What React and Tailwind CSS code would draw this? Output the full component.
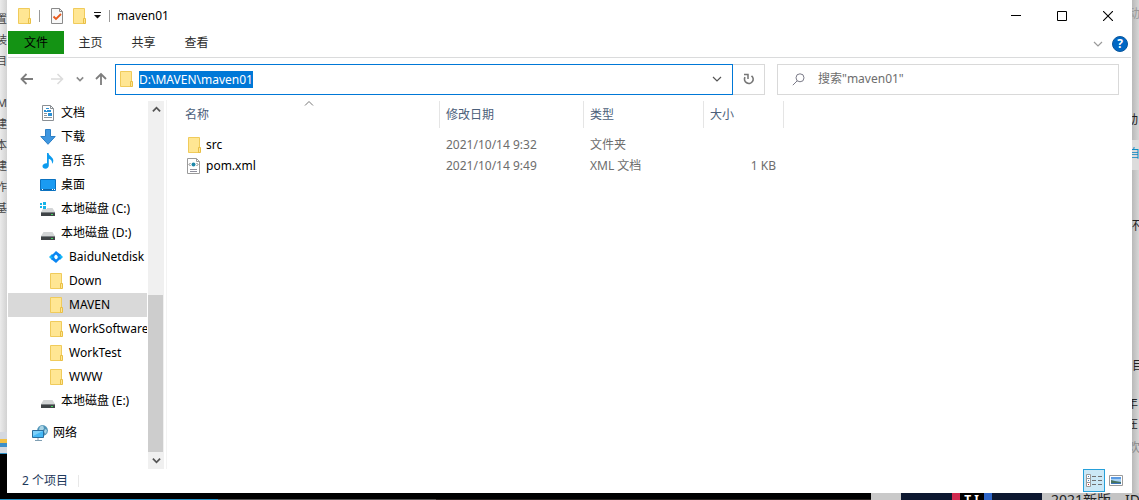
import { useEffect, useRef } from 'react'

const NAV_ITEMS = [
  { name: '文档', icon: 'doc', level: 1 },
  { name: '下载', icon: 'download', level: 1 },
  { name: '音乐', icon: 'music', level: 1 },
  { name: '桌面', icon: 'desktop', level: 1 },
  { name: '本地磁盘 (C:)', icon: 'system', level: 1 },
  { name: '本地磁盘 (D:)', icon: 'disk', level: 1 },
  { name: 'BaiduNetdisk', icon: 'baidu', level: 2 },
  { name: 'Down', icon: 'folder', level: 2 },
  { name: 'MAVEN', icon: 'folder', level: 2, selected: true },
  { name: 'WorkSoftware', icon: 'folder', level: 2 },
  { name: 'WorkTest', icon: 'folder', level: 2 },
  { name: 'WWW', icon: 'folder', level: 2 },
  { name: '本地磁盘 (E:)', icon: 'disk', level: 1 },
]

const FILES = [
  { name: 'src', icon: 'folder', date: '2021/10/14 9:32', type: '文件夹', size: '' },
  { name: 'pom.xml', icon: 'xml', date: '2021/10/14 9:49', type: 'XML 文档', size: '1 KB' },
]

function FolderIcon() {
  return (
    <svg width="16" height="16" viewBox="0 0 16 16" className="shrink-0">
      <path d="M2.5.5h11v15h-11z" fill="#ffe693" stroke="#f0cb5b" />
      <path d="M12.5 10.5h2v5h-2z" fill="#ffe693" stroke="#e9bf45" />
    </svg>
  )
}

function Drive({ windows }) {
  return (
    <svg width="16" height="16" viewBox="0 0 16 16" className="shrink-0">
      <path d="M3.5 7h9l2.5 4H1z" fill="#d3d5d6" />
      <path d="M1 11h14v4H1z" fill="#3f4346" />
      <path d="M1 11h14v1H1z" fill="#7b8083" />
      <path d="M11 13h2v1h-2z" fill="#3fd65b" />
      {windows && (
        <>
          <path d="M0 1h7v7H0z" fill="#fff" />
          <path d="M0 2h2v2H0zM3 1h3v3H3zM0 5h2v2H0zM3 5h3v3H3z" fill="#16b4e8" />
        </>
      )}
    </svg>
  )
}

function Icon({ name }) {
  switch (name) {
    case 'folder':
      return <FolderIcon />
    case 'disk':
      return <Drive />
    case 'system':
      return <Drive windows />
    case 'doc':
      return (
        <svg width="16" height="16" viewBox="0 0 16 16" className="shrink-0">
          <path d="M2.5.5h8l3 3v12h-11z" fill="#fff" stroke="#8a8f94" />
          <path d="M10.5.5v3h3" fill="none" stroke="#8a8f94" />
          <path d="M4 8.5h3M4 10.500h3M4 12.500h8" stroke="#8b959c" />
          <path d="M6 3h3v1H6zM4 5h2v1H4zM7 5h4v1H7zM4 6h7v1H4zM8 8h4v3H8z" fill="#2a8fd4" />
        </svg>
      )
    case 'download':
      return (
        <svg width="16" height="16" viewBox="0 0 16 16" className="shrink-0">
          <path d="M5.5.5h5v7h4.7L8 15.3.8 7.5h4.7z" fill="#3f97e0" stroke="#2c7fc6" />
        </svg>
      )
    case 'music':
      return (
        <svg width="16" height="16" viewBox="0 0 16 16" className="shrink-0">
          <path
            d="M7 0h1.5c.3 3 4.8 4 4.8 7.5 0 1.5-.6 2.5-1.3 3.3.4-2.8-1-4.3-3.2-5V12.500c0 1.900-1.500 3.300-3.300 3.300S2.500 14.800 2.500 13.300c0-1.800 2-3.300 4.500-3z"
            fill="#0c9bee"
          />
        </svg>
      )
    case 'desktop':
      return (
        <svg width="16" height="16" viewBox="0 0 16 16" className="shrink-0">
          <path d="M.5 2.500h15v11H.5z" fill="#1a9bf2" stroke="#0b72c0" />
          <path d="M1 12h14v1H1z" fill="#0e65a8" />
          <path d="M2 12h1v1H2zM12 12h1v1h-1zM14 12h1v1h-1z" fill="#fff" />
        </svg>
      )
    case 'baidu':
      return (
        <svg width="16" height="16" viewBox="0 0 16 16" className="shrink-0">
          <path d="M1 8l3-3 3 3-3 3z" fill="#17b9f7" />
          <path d="M9 8l3-3 3 3-3 3z" fill="#17b9f7" />
          <path d="M3 7l5-5 5 4-2.500 2L8 5.500 4.500 8.500z" fill="#0a86f2" />
          <path d="M13 9l-5 5-5-4 2.500-2L8 10.500l3.500-3z" fill="#0a86f2" />
          <path d="M8 6.500L9.800 8 8 9.500 6.200 8z" fill="#fff" />
        </svg>
      )
    case 'network':
      return (
        <svg width="16" height="16" viewBox="0 0 16 16" className="shrink-0">
          <circle cx="10.5" cy="5.5" r="5.400" fill="#4f94b8" />
          <path d="M8 1.500l3-1 1 3-2 3-3-2zM13 4l2 1-1 4-2-2z" fill="#a9d3e4" />
          <path d="M.5 5.500h11v7H.5z" fill="#45b8f5" stroke="#2b6d9c" />
          <path d="M1 6h10L1 11z" fill="#7dd1fb" />
          <path d="M6 13v2M3 15.500h7" stroke="#7f9fb3" />
        </svg>
      )
    case 'xml':
      return (
        <svg width="16" height="16" viewBox="0 0 16 16" className="shrink-0">
          <path d="M1.5.5h9l3 3v12h-12z" fill="#fff" stroke="#9a9a9a" />
          <path d="M10.5.5v3h3" fill="none" stroke="#9a9a9a" />
          <circle cx="7.5" cy="6.500" r="2" fill="#1c86a8" />
          <path d="M4.500 5L3 6.500 4.500 8M10.500 5L12 6.500 10.500 8" fill="none" stroke="#777" />
          <path d="M4 11.500h7M4 13.500h7" stroke="#8f8f9c" />
        </svg>
      )
    default:
      return null
  }
}

function Chevron({ direction = 'down', color = '#555', thick = false, size = 10 }) {
  return (
    <svg width={size} height={size} viewBox="0 0 10 10" className="shrink-0">
      <path
        d={direction === 'up' ? 'M1 7l4-4 4 4' : 'M1 3l4 4 4-4'}
        fill="none"
        stroke={color}
        strokeWidth={thick ? 2 : 1.2}
      />
    </svg>
  )
}

function TitleBar() {
  return (
    <header className="flex h-[31px] items-center justify-between">
      <div className="flex items-center pl-2">
        <FolderIcon />
        <span className="ml-[7px] h-3 w-px bg-[#999]" />
        <button aria-label="属性" className="ml-[9px]">
          <svg width="16" height="16" viewBox="0 0 16 16">
            <path d="M2.5.5h8l3 3v12h-11z" fill="#f8f8f8" stroke="#8a8a8a" />
            <path d="M10.5.5v3h3" fill="none" stroke="#8a8a8a" />
            <path d="M4.500 8.500l2.500 2.500 5-5" fill="none" stroke="#e8591c" strokeWidth="1.800" />
          </svg>
        </button>
        <button aria-label="新建文件夹" className="ml-[6px]">
          <FolderIcon />
        </button>
        <button aria-label="自定义快速访问工具栏" className="ml-[7px]">
          <svg width="7" height="7" viewBox="0 0 7 7">
            <path d="M0 0h7v1H0zM0 3h7L3.5 6.500z" fill="#111" />
          </svg>
        </button>
        <span className="ml-2 h-3 w-px bg-[#999]" />
        <h1 className="ml-[7px] text-[12px]">maven01</h1>
      </div>
      <div className="flex self-stretch">
        <button aria-label="最小化" className="flex w-[46px] items-center justify-center">
          <svg width="10" height="10" viewBox="0 0 10 10">
            <path d="M0 4h10v1H0z" />
          </svg>
        </button>
        <button aria-label="最大化" className="flex w-[46px] items-center justify-center">
          <svg width="10" height="10" viewBox="0 0 10 10">
            <path d="M.5.5h9v9h-9z" fill="none" stroke="#000" />
          </svg>
        </button>
        <button aria-label="关闭" className="flex w-[46px] items-center justify-center">
          <svg width="10" height="10" viewBox="0 0 10 10">
            <path d="M0 0l10 10M10 0L0 10" stroke="#000" strokeWidth="1.100" />
          </svg>
        </button>
      </div>
    </header>
  )
}

function Ribbon() {
  return (
    <div className="flex h-[27px] items-start justify-between border-b border-[#dadbdc]">
      <div className="flex h-[23px] text-[#2b2b2b]">
        <button className="w-14 bg-[#149314] pt-px text-black">文件</button>
        <button className="w-[53px] pt-px">主页</button>
        <button className="w-[53px] pt-px">共享</button>
        <button className="w-[53px] pt-px">查看</button>
      </div>
      <div className="flex h-[26px] items-center gap-[9px] pr-[3px]">
        <button aria-label="展开功能区">
          <Chevron color="#9a9a9a" />
        </button>
        <button
          aria-label="帮助"
          className="flex size-4 items-center justify-center rounded-full border border-[#0a569c] bg-[#0067c4] text-[12px] leading-[14px] font-bold text-white"
        >
          ?
        </button>
      </div>
    </div>
  )
}

function AddressBar() {
  const inputRef = useRef(null)

  // The path is selected as soon as the bar is in edit mode
  useEffect(() => {
    inputRef.current.focus()
    inputRef.current.select()
  }, [])

  return (
    <div className="flex h-[42px] items-center pr-3">
      <div className="flex w-[107px] shrink-0 items-center pl-3">
        <button aria-label="返回">
          <svg width="14" height="12" viewBox="0 0 14 12">
            <path d="M13 6H2M6.500 1L1.500 6l5 5" fill="none" stroke="#7d7d7d" strokeWidth="1.800" />
          </svg>
        </button>
        <button aria-label="前进" className="ml-4">
          <svg width="14" height="12" viewBox="0 0 14 12">
            <path d="M1 6h11M7.500 1l5 5-5 5" fill="none" stroke="#dcdcdc" strokeWidth="1.600" />
          </svg>
        </button>
        <button aria-label="最近浏览的位置" className="ml-3">
          <Chevron size={8} color="#8a8a8a" thick />
        </button>
        <button aria-label="上移" className="ml-[11px]">
          <svg width="12" height="14" viewBox="0 0 12 14">
            <path d="M6 13V2M1 7l5-5 5 5" fill="none" stroke="#7d7d7d" strokeWidth="1.800" />
          </svg>
        </button>
      </div>
      <div className="flex h-[31px] min-w-0 flex-1 items-center border border-[#0078d7] pl-[2px]">
        <FolderIcon />
        <input
          ref={inputRef}
          aria-label="地址"
          defaultValue="D:\MAVEN\maven01"
          className="ml-[5px] h-[17px] min-w-0 flex-1 leading-[17px] outline-none selection:bg-[#0078d7] selection:text-white"
        />
        <button aria-label="以前的位置" className="flex w-[31px] justify-center">
          <Chevron color="#555" />
        </button>
      </div>
      <button
        aria-label="刷新"
        className="flex h-[31px] w-8 items-center justify-center border border-l-0 border-[#d9d9d9]"
      >
        <svg width="12" height="12" viewBox="0 0 12 12">
          <path d="M2 4.200A4.300 4.300 0 1 0 8.500 2.800" fill="none" stroke="#757575" strokeWidth="1.700" />
          <path d="M1 1.500h4V6" fill="none" stroke="#757575" strokeWidth="1.500" />
        </svg>
      </button>
      <label className="ml-3 flex h-[31px] w-[342px] items-center border border-[#d9d9d9] pl-[14px]">
        <svg width="13" height="13" viewBox="0 0 13 13" className="shrink-0">
          <circle cx="8" cy="4.800" r="4" fill="none" stroke="#7b7b88" />
          <path d="M5.200 7.800L.8 12.200" stroke="#7b7b88" />
        </svg>
        <input
          type="search"
          aria-label="搜索"
          placeholder={'搜索"maven01"'}
          className="ml-[13px] min-w-0 flex-1 outline-none placeholder:text-[#6d6d6d]"
        />
      </label>
    </div>
  )
}

function NavPane() {
  return (
    <nav className="flex w-[159px] shrink-0 border-r border-[#f3f3f3] pt-px">
      <ul className="w-[139px] overflow-hidden">
        {NAV_ITEMS.map((item) => (
          <li key={item.name} className={item.selected ? 'bg-[#d9d9d9]' : ''}>
            <a
              href="#"
              className={`flex h-6 items-center gap-[5px] whitespace-nowrap ${item.level === 1 ? 'pl-8' : 'pl-10'}`}
            >
              <Icon name={item.icon} />
              {item.name}
            </a>
          </li>
        ))}
        <li className="mt-2">
          <a href="#" className="flex h-6 items-center gap-[5px] pl-6">
            <Icon name="network" />
            网络
          </a>
        </li>
      </ul>
      {/* Scrollbar */}
      <div className="ml-px flex w-4 flex-col bg-[#f0f0f0]">
        <button aria-label="向上滚动" className="flex h-[17px] items-center justify-center">
          <Chevron direction="up" thick size={9} />
        </button>
        <div className="flex flex-1 flex-col justify-end pr-px">
          <div className="h-[157px] bg-[#cdcdcd]" />
        </div>
        <button aria-label="向下滚动" className="flex h-[17px] items-center justify-center">
          <Chevron thick size={9} />
        </button>
      </div>
    </nav>
  )
}

function FileList() {
  return (
    <main className="min-w-0 flex-1 pt-px">
      <table className="w-[617px] table-fixed border-separate border-spacing-0 text-left text-[#6d6d6d]">
        <colgroup>
          <col className="w-[273px]" />
          <col className="w-36" />
          <col className="w-[120px]" />
          <col className="w-20" />
        </colgroup>
        <thead className="text-[#4c607a]">
          <tr className="h-[27px]">
            <th className="relative border-r border-[#e5e5e5] p-0 pl-[18px] font-normal">
              名称
              <span className="absolute inset-x-0 top-0 flex justify-center pl-3">
                <svg width="10" height="5" viewBox="0 0 10 5">
                  <path d="M1 4.500l4-4 4 4" fill="none" stroke="#777" />
                </svg>
              </span>
            </th>
            <th className="border-r border-[#e5e5e5] p-0 pl-[6px] font-normal">修改日期</th>
            <th className="border-r border-[#e5e5e5] p-0 pl-[6px] font-normal">类型</th>
            <th className="border-r border-[#e5e5e5] p-0 pl-[6px] font-normal">大小</th>
          </tr>
        </thead>
        <tbody className="before:block before:h-[6px]">
          {FILES.map((file) => (
            <tr key={file.name} className="h-[21px]">
              <td className="p-0 pl-[19px] text-black">
                <div className="flex items-center gap-1">
                  <Icon name={file.icon} />
                  {file.name}
                </div>
              </td>
              <td className="p-0 pl-[6px]">{file.date}</td>
              <td className="p-0 pl-[6px]">{file.type}</td>
              <td className="p-0 pr-2 text-right">{file.size}</td>
            </tr>
          ))}
        </tbody>
      </table>
    </main>
  )
}

function StatusBar() {
  return (
    <footer className="flex h-6 items-start justify-between pr-1 pl-[14px]">
      <div className="flex h-6 items-center gap-[10px] text-[#1e395b]">
        2 个项目
        <span className="h-3 w-px bg-[#e8e8e8]" />
      </div>
      <div className="flex">
        <button
          aria-label="详细信息"
          className="flex h-[23px] w-[22px] items-center justify-center border border-[#26a0da] bg-[#cbe8f6]"
        >
          <svg width="16" height="13" viewBox="0 0 16 13">
            <path d="M.5.5h4v4h-4zM.5 4.500h4v4h-4zM.5 8.500h4v4h-4z" fill="#fff" stroke="#999" />
            <path d="M6 2.500h4M12 2.500h4M6 6.500h4M12 6.500h4M6 10.500h4M12 10.500h4" stroke="#707070" />
            <path d="M2 2h1v1H2zM2 6h1v1H2z" fill="#3a7ec0" />
            <path d="M2 10h1v1H2z" fill="#c22" />
          </svg>
        </button>
        <button aria-label="大缩略图" className="flex h-[22px] w-[22px] items-center justify-center">
          <svg width="14" height="11" viewBox="0 0 14 11">
            <path d="M.5.5h13v10H.5z" fill="#fff" stroke="#9a9a9a" />
            <path d="M2 2h10v7H2z" fill="#a5d0f5" />
            <path d="M2 2h10v2H2z" fill="#5b9ae2" />
            <path d="M2 5l4 1 6 1v2H2z" fill="#47735f" />
            <path d="M2 8h10v1H2z" fill="#3c74b8" />
          </svg>
        </button>
      </div>
    </footer>
  )
}

/* Slivers of the pages that lie behind the window */
function LeftEdge() {
  return (
    <div className="flex w-[7px] flex-col overflow-hidden bg-black">
      <div className="flex h-[432px] flex-col items-end bg-linear-to-r from-[#ebebeb] to-[#d2d2d2] pt-2 text-[11px] leading-[21px] whitespace-nowrap text-[#444]">
        <span>置</span>
        <span>装</span>
        <span>目</span>
        <span className="mt-[21px]">成M</span>
        <span>建</span>
        <span>本</span>
        <span>建</span>
        <span>作</span>
        <span>基</span>
      </div>
      <div className="flex h-[21px] flex-col justify-center bg-[#d4d8e0]">
        <div className="h-1 bg-[#f2c044]" />
        <div className="h-1 bg-[#3d8fc9]" />
      </div>
      <div className="h-px bg-[#2f8fc4]" />
    </div>
  )
}

function RightEdge() {
  return (
    <div className="flex w-[7px] flex-col overflow-hidden bg-linear-to-r from-[#b9b9b9] to-[#d6d6d6] text-[12px] leading-5 text-[#222]">
      <span className="mt-1 -ml-1 w-4 text-[#999]">动</span>
      <span className="mt-[86px] -ml-[6px] w-4">动</span>
      <span className="mt-[10px] h-[30px] bg-[#dcdcdc] pt-1 text-[#0d8cc4]">
        <span className="-ml-1 block w-4">自</span>
      </span>
      <span className="mt-[46px] -ml-1 w-4">环</span>
      <span className="mt-[120px] w-4">目</span>
      <span className="mt-[18px] -ml-[6px] w-4">年</span>
      <span className="-ml-[6px] w-4">在</span>
      <span className="mt-1 -ml-1 w-4 text-[#888]">欢</span>
    </div>
  )
}

function BottomEdge() {
  return (
    <div className="flex h-[7px] overflow-hidden">
      <div className="flex flex-1 items-end bg-black">
        <div className="h-px w-1/4 bg-[#2492c4]" />
        <div className="h-px w-1/4 bg-[#555]" />
        <div className="h-px w-1/2 bg-[#2a2422]" />
      </div>
      <div className="w-[30px] bg-[#c9c9c9]" />
      <div className="flex w-[141px] justify-center bg-[#0d1830]">
        <div className="h-full w-2 bg-[#d22a50]" />
        <div className="w-6 bg-black text-center text-[12px] leading-[14px] font-bold text-white">T I</div>
        <div className="h-full w-2 bg-[#2f66c8]" />
      </div>
      <div className="w-[97px] bg-[#c4c4c4] pl-[9px] text-[14px] leading-[14px] whitespace-nowrap text-[#222]">
        2021新版，ID
      </div>
    </div>
  )
}

export default function App() {
  return (
    <div className="flex min-h-screen flex-col overflow-hidden font-['Noto_Sans','Noto_Sans_CJK_SC',sans-serif] text-[12px] leading-4 text-black">
      <div className="flex flex-1">
        <LeftEdge />
        <div className="flex min-w-0 flex-1 flex-col bg-white px-px">
          <TitleBar />
          <Ribbon />
          <AddressBar />
          <div className="flex flex-1">
            <NavPane />
            <FileList />
          </div>
          <StatusBar />
        </div>
        <RightEdge />
      </div>
      <BottomEdge />
    </div>
  )
}
